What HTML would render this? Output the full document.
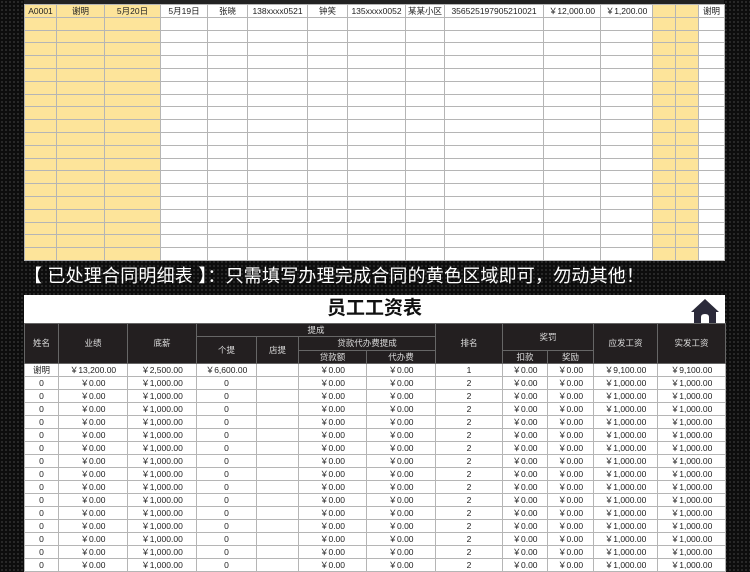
<!DOCTYPE html>
<html><head><meta charset="utf-8"><style>
body{margin:0;width:750px;height:563px;overflow:hidden;background:#0d0d0d;background-image:radial-gradient(#2a2a2a 1px,transparent 1.2px);background-size:4px 4px;font-family:"Liberation Sans","Noto Sans CJK SC",sans-serif;position:relative}
table{border-collapse:collapse;table-layout:fixed;position:absolute}
td{border:1px solid #b5b5b5;padding:0;font-size:8.5px;line-height:10px;text-align:center;white-space:nowrap;overflow:hidden;color:#222}
#t1{left:24px;top:4px;width:700px;background:#fff}
#t1 td{height:11.8px}
.y{background:#fde49a}
#top{position:absolute;left:24px;top:0;width:700px;height:4px;background:#222}
#cap{position:absolute;left:24px;top:263px;color:#fff;font-size:18px;line-height:26px;letter-spacing:0.2px;white-space:nowrap}
#panel{position:absolute;left:24px;top:295px;width:701px;height:268px;background:#fff}
#title{position:absolute;left:0;width:701px;top:0;height:28px;line-height:28px;text-align:center;font-size:19px;font-weight:bold;color:#111}
#t2{left:24px;top:323px;width:701px}
#t2 .h td{background:#231f20;color:#ddd;border-color:#666;height:12.3px}
#t2 .d td{height:12px;line-height:10px;background:#fff}
</style></head><body>
<div id="top"></div>
<table id="t1">
<colgroup><col style="width:32px"><col style="width:48px"><col style="width:56px"><col style="width:47px"><col style="width:40px"><col style="width:60px"><col style="width:40px"><col style="width:58px"><col style="width:39px"><col style="width:99px"><col style="width:57px"><col style="width:52px"><col style="width:23px"><col style="width:23px"><col style="width:26px"></colgroup>
<tr><td class="y">A0001</td><td class="y">谢明</td><td class="y">5月20日</td><td>5月19日</td><td>张晓</td><td>138xxxx0521</td><td>钟笑</td><td>135xxxx0052</td><td>某某小区</td><td>356525197905210021</td><td>￥12,000.00</td><td>￥1,200.00</td><td class="y"></td><td class="y"></td><td>谢明</td></tr>
<tr><td class="y"></td><td class="y"></td><td class="y"></td><td></td><td></td><td></td><td></td><td></td><td></td><td></td><td></td><td></td><td class="y"></td><td class="y"></td><td></td></tr>
<tr><td class="y"></td><td class="y"></td><td class="y"></td><td></td><td></td><td></td><td></td><td></td><td></td><td></td><td></td><td></td><td class="y"></td><td class="y"></td><td></td></tr>
<tr><td class="y"></td><td class="y"></td><td class="y"></td><td></td><td></td><td></td><td></td><td></td><td></td><td></td><td></td><td></td><td class="y"></td><td class="y"></td><td></td></tr>
<tr><td class="y"></td><td class="y"></td><td class="y"></td><td></td><td></td><td></td><td></td><td></td><td></td><td></td><td></td><td></td><td class="y"></td><td class="y"></td><td></td></tr>
<tr><td class="y"></td><td class="y"></td><td class="y"></td><td></td><td></td><td></td><td></td><td></td><td></td><td></td><td></td><td></td><td class="y"></td><td class="y"></td><td></td></tr>
<tr><td class="y"></td><td class="y"></td><td class="y"></td><td></td><td></td><td></td><td></td><td></td><td></td><td></td><td></td><td></td><td class="y"></td><td class="y"></td><td></td></tr>
<tr><td class="y"></td><td class="y"></td><td class="y"></td><td></td><td></td><td></td><td></td><td></td><td></td><td></td><td></td><td></td><td class="y"></td><td class="y"></td><td></td></tr>
<tr><td class="y"></td><td class="y"></td><td class="y"></td><td></td><td></td><td></td><td></td><td></td><td></td><td></td><td></td><td></td><td class="y"></td><td class="y"></td><td></td></tr>
<tr><td class="y"></td><td class="y"></td><td class="y"></td><td></td><td></td><td></td><td></td><td></td><td></td><td></td><td></td><td></td><td class="y"></td><td class="y"></td><td></td></tr>
<tr><td class="y"></td><td class="y"></td><td class="y"></td><td></td><td></td><td></td><td></td><td></td><td></td><td></td><td></td><td></td><td class="y"></td><td class="y"></td><td></td></tr>
<tr><td class="y"></td><td class="y"></td><td class="y"></td><td></td><td></td><td></td><td></td><td></td><td></td><td></td><td></td><td></td><td class="y"></td><td class="y"></td><td></td></tr>
<tr><td class="y"></td><td class="y"></td><td class="y"></td><td></td><td></td><td></td><td></td><td></td><td></td><td></td><td></td><td></td><td class="y"></td><td class="y"></td><td></td></tr>
<tr><td class="y"></td><td class="y"></td><td class="y"></td><td></td><td></td><td></td><td></td><td></td><td></td><td></td><td></td><td></td><td class="y"></td><td class="y"></td><td></td></tr>
<tr><td class="y"></td><td class="y"></td><td class="y"></td><td></td><td></td><td></td><td></td><td></td><td></td><td></td><td></td><td></td><td class="y"></td><td class="y"></td><td></td></tr>
<tr><td class="y"></td><td class="y"></td><td class="y"></td><td></td><td></td><td></td><td></td><td></td><td></td><td></td><td></td><td></td><td class="y"></td><td class="y"></td><td></td></tr>
<tr><td class="y"></td><td class="y"></td><td class="y"></td><td></td><td></td><td></td><td></td><td></td><td></td><td></td><td></td><td></td><td class="y"></td><td class="y"></td><td></td></tr>
<tr><td class="y"></td><td class="y"></td><td class="y"></td><td></td><td></td><td></td><td></td><td></td><td></td><td></td><td></td><td></td><td class="y"></td><td class="y"></td><td></td></tr>
<tr><td class="y"></td><td class="y"></td><td class="y"></td><td></td><td></td><td></td><td></td><td></td><td></td><td></td><td></td><td></td><td class="y"></td><td class="y"></td><td></td></tr>
<tr><td class="y"></td><td class="y"></td><td class="y"></td><td></td><td></td><td></td><td></td><td></td><td></td><td></td><td></td><td></td><td class="y"></td><td class="y"></td><td></td></tr>
</table>
<div id="cap">【 已处理合同明细表 】：只需填写办理完成合同的黄色区域即可，勿动其他！</div>
<div id="panel"><div id="title">员工工资表</div>
<svg style="position:absolute;left:666px;top:3px" width="30" height="27" viewBox="0 0 30 27"><path d="M15 1 L29 14 L26 14 L26 27 L19 27 L19 19 Q19 16 15 16 Q11 16 11 19 L11 27 L4 27 L4 14 L1 14 Z" fill="#2b2a3a"/></svg>
</div>
<table id="t2">
<colgroup><col style="width:34px"><col style="width:69px"><col style="width:69px"><col style="width:60px"><col style="width:42px"><col style="width:68px"><col style="width:69px"><col style="width:67px"><col style="width:45px"><col style="width:46px"><col style="width:64px"><col style="width:68px"></colgroup>
<tr class="h"><td rowspan="3">姓名</td><td rowspan="3">业绩</td><td rowspan="3">底薪</td><td colspan="4">提成</td><td rowspan="3">排名</td><td colspan="2" rowspan="2">奖罚</td><td rowspan="3">应发工资</td><td rowspan="3">实发工资</td></tr>
<tr class="h"><td rowspan="2">个提</td><td rowspan="2">店提</td><td colspan="2">贷款代办费提成</td></tr>
<tr class="h"><td>贷款额</td><td>代办费</td><td>扣款</td><td>奖励</td></tr>
<tr class="d"><td>谢明</td><td>￥13,200.00</td><td>￥2,500.00</td><td>￥6,600.00</td><td></td><td>￥0.00</td><td>￥0.00</td><td>1</td><td>￥0.00</td><td>￥0.00</td><td>￥9,100.00</td><td>￥9,100.00</td></tr>
<tr class="d"><td>0</td><td>￥0.00</td><td>￥1,000.00</td><td>0</td><td></td><td>￥0.00</td><td>￥0.00</td><td>2</td><td>￥0.00</td><td>￥0.00</td><td>￥1,000.00</td><td>￥1,000.00</td></tr>
<tr class="d"><td>0</td><td>￥0.00</td><td>￥1,000.00</td><td>0</td><td></td><td>￥0.00</td><td>￥0.00</td><td>2</td><td>￥0.00</td><td>￥0.00</td><td>￥1,000.00</td><td>￥1,000.00</td></tr>
<tr class="d"><td>0</td><td>￥0.00</td><td>￥1,000.00</td><td>0</td><td></td><td>￥0.00</td><td>￥0.00</td><td>2</td><td>￥0.00</td><td>￥0.00</td><td>￥1,000.00</td><td>￥1,000.00</td></tr>
<tr class="d"><td>0</td><td>￥0.00</td><td>￥1,000.00</td><td>0</td><td></td><td>￥0.00</td><td>￥0.00</td><td>2</td><td>￥0.00</td><td>￥0.00</td><td>￥1,000.00</td><td>￥1,000.00</td></tr>
<tr class="d"><td>0</td><td>￥0.00</td><td>￥1,000.00</td><td>0</td><td></td><td>￥0.00</td><td>￥0.00</td><td>2</td><td>￥0.00</td><td>￥0.00</td><td>￥1,000.00</td><td>￥1,000.00</td></tr>
<tr class="d"><td>0</td><td>￥0.00</td><td>￥1,000.00</td><td>0</td><td></td><td>￥0.00</td><td>￥0.00</td><td>2</td><td>￥0.00</td><td>￥0.00</td><td>￥1,000.00</td><td>￥1,000.00</td></tr>
<tr class="d"><td>0</td><td>￥0.00</td><td>￥1,000.00</td><td>0</td><td></td><td>￥0.00</td><td>￥0.00</td><td>2</td><td>￥0.00</td><td>￥0.00</td><td>￥1,000.00</td><td>￥1,000.00</td></tr>
<tr class="d"><td>0</td><td>￥0.00</td><td>￥1,000.00</td><td>0</td><td></td><td>￥0.00</td><td>￥0.00</td><td>2</td><td>￥0.00</td><td>￥0.00</td><td>￥1,000.00</td><td>￥1,000.00</td></tr>
<tr class="d"><td>0</td><td>￥0.00</td><td>￥1,000.00</td><td>0</td><td></td><td>￥0.00</td><td>￥0.00</td><td>2</td><td>￥0.00</td><td>￥0.00</td><td>￥1,000.00</td><td>￥1,000.00</td></tr>
<tr class="d"><td>0</td><td>￥0.00</td><td>￥1,000.00</td><td>0</td><td></td><td>￥0.00</td><td>￥0.00</td><td>2</td><td>￥0.00</td><td>￥0.00</td><td>￥1,000.00</td><td>￥1,000.00</td></tr>
<tr class="d"><td>0</td><td>￥0.00</td><td>￥1,000.00</td><td>0</td><td></td><td>￥0.00</td><td>￥0.00</td><td>2</td><td>￥0.00</td><td>￥0.00</td><td>￥1,000.00</td><td>￥1,000.00</td></tr>
<tr class="d"><td>0</td><td>￥0.00</td><td>￥1,000.00</td><td>0</td><td></td><td>￥0.00</td><td>￥0.00</td><td>2</td><td>￥0.00</td><td>￥0.00</td><td>￥1,000.00</td><td>￥1,000.00</td></tr>
<tr class="d"><td>0</td><td>￥0.00</td><td>￥1,000.00</td><td>0</td><td></td><td>￥0.00</td><td>￥0.00</td><td>2</td><td>￥0.00</td><td>￥0.00</td><td>￥1,000.00</td><td>￥1,000.00</td></tr>
<tr class="d"><td>0</td><td>￥0.00</td><td>￥1,000.00</td><td>0</td><td></td><td>￥0.00</td><td>￥0.00</td><td>2</td><td>￥0.00</td><td>￥0.00</td><td>￥1,000.00</td><td>￥1,000.00</td></tr>
<tr class="d"><td>0</td><td>￥0.00</td><td>￥1,000.00</td><td>0</td><td></td><td>￥0.00</td><td>￥0.00</td><td>2</td><td>￥0.00</td><td>￥0.00</td><td>￥1,000.00</td><td>￥1,000.00</td></tr>
</table>
</body></html>
